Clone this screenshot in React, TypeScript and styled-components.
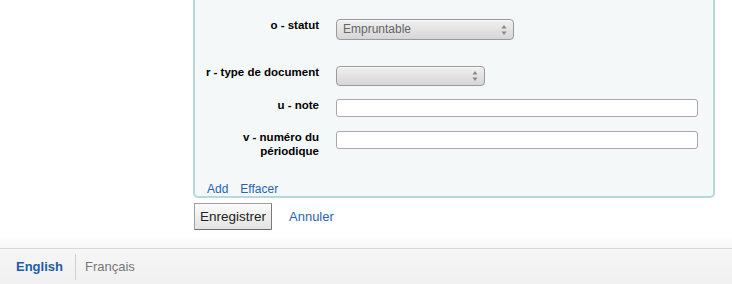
import React from 'react'
import styled, { createGlobalStyle } from 'styled-components'

const GlobalStyle = createGlobalStyle`
  html, body {
    margin: 0;
    padding: 0;
    background: #ffffff;
    font-family: "Liberation Sans", Arial, sans-serif;
  }
`

const Page = styled.div`
  width: 732px;
  height: 284px;
  overflow: hidden;
  display: flex;
  flex-direction: column;
`

const Main = styled.div`
  padding-left: 193px;
  width: 522px;
`

const Fieldset = styled.div`
  background: #f4f8f9;
  border: 2px solid #b9d8d9;
  border-top: 0;
  border-radius: 0 0 5px 5px;
  padding: 18px 15px 0 10px;
`

const Row = styled.div<{ $gap: number }>`
  display: flex;
  align-items: flex-start;
  margin-top: ${(p) => p.$gap}px;
`

const Label = styled.label`
  box-sizing: border-box;
  width: 118px;
  flex-shrink: 0;
  padding-right: 4px;
  margin-right: 13px;
  text-align: right;
  font-size: 11.5px;
  font-weight: bold;
  line-height: 14px;
  color: #000;
`

const SelectBox = styled.div<{ $width: number; $height: number }>`
  position: relative;
  box-sizing: border-box;
  width: ${(p) => p.$width}px;
  height: ${(p) => p.$height}px;
  margin-top: 1px;
  border: 1px solid #9a9a9a;
  border-radius: 4px;
  background: linear-gradient(#f0f0f0, #d6d6d6);
  box-shadow: inset 0 1px 0 #fafafa;
  font-size: 12px;
  line-height: ${(p) => p.$height - 2}px;
  color: #666;
  padding-left: 6px;
`

const Arrows = styled.svg`
  position: absolute;
  right: 6px;
  top: 50%;
  margin-top: -6px;
`

const TextInput = styled.input`
  box-sizing: border-box;
  width: 362px;
  height: 18px;
  margin: 1px 0 0;
  border: 1px solid #a8a8a8;
  border-radius: 3px;
  background: #fff;
  padding: 0 4px;
`

const Links = styled.div`
  margin: 24px 0 0 2px;
  display: flex;
  gap: 12px;
  font-size: 12px;
  line-height: 14px;
`

const Link = styled.a`
  color: #1f64b6;
  text-decoration: none;
`

const Actions = styled.div`
  display: flex;
  align-items: center;
  gap: 17px;
  margin-top: 5px;
  padding-left: 1px;
`

const Button = styled.button`
  box-sizing: border-box;
  width: 78px;
  height: 27px;
  padding: 0;
  font-family: "Liberation Sans", Arial, sans-serif;
  font-size: 13.5px;
  color: #222;
  background: linear-gradient(#fbfbfb, #e3e3e3);
  border: 1px solid #a0a0a0;
  border-right-color: #7a7a7a;
  border-bottom-color: #6f6f6f;
  border-radius: 1px;
`

const CancelLink = styled.a`
  font-size: 13px;
  color: #1f64b6;
  text-decoration: none;
`

const Footer = styled.div`
  margin-top: 18px;
  flex: 1;
  position: relative;
  border-top: 1px solid #d9d9d9;
  background: linear-gradient(#f6f6f6, #f0f0f0);
  display: flex;
  align-items: center;
  padding-left: 16px;
  &::before {
    content: '';
    position: absolute;
    left: 0;
    right: 0;
    top: -14px;
    height: 13px;
    background: linear-gradient(#ffffff, #f7f7f7);
  }
`

const Lang = styled.a<{ $active?: boolean }>`
  font-size: 13px;
  font-weight: ${(p) => (p.$active ? 'bold' : 'normal')};
  color: ${(p) => (p.$active ? '#1a5ca6' : '#777')};
  text-decoration: none;
`

const Separator = styled.span`
  width: 1px;
  height: 26px;
  background: #d0d0d0;
  margin: 0 9px 0 12px;
`

const SelectArrows = () => (
  <Arrows width="6" height="12" viewBox="0 0 6 12">
    <path d="M3 1 L5.5 4.5 L0.5 4.5 Z" fill="#888" />
    <path d="M3 11 L5.5 7.5 L0.5 7.5 Z" fill="#888" />
  </Arrows>
)

export default function App() {
  return (
    <Page>
      <GlobalStyle />
      <Main>
        <Fieldset>
          <Row $gap={0}>
            <Label>o - statut</Label>
            <SelectBox $width={178} $height={21}>
              Empruntable
              <SelectArrows />
            </SelectBox>
          </Row>
          <Row $gap={25}>
            <Label>r - type de document</Label>
            <SelectBox $width={149} $height={20}>
              <SelectArrows />
            </SelectBox>
          </Row>
          <Row $gap={12}>
            <Label>u - note</Label>
            <TextInput type="text" />
          </Row>
          <Row $gap={13}>
            <Label>v - numéro du périodique</Label>
            <TextInput type="text" />
          </Row>
          <Links>
            <Link href="#">Add</Link>
            <Link href="#">Effacer</Link>
          </Links>
        </Fieldset>
        <Actions>
          <Button type="button">Enregistrer</Button>
          <CancelLink href="#">Annuler</CancelLink>
        </Actions>
      </Main>
      <Footer>
        <Lang $active href="#">English</Lang>
        <Separator />
        <Lang href="#">Français</Lang>
      </Footer>
    </Page>
  )
}
